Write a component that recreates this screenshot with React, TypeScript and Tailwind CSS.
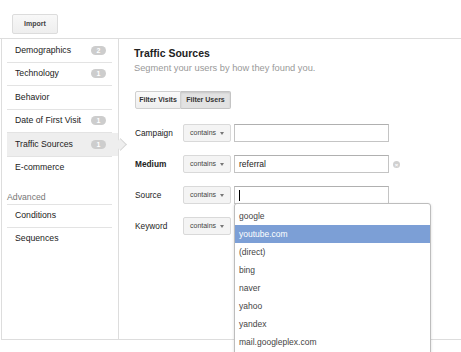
const sideItems = [
  { label: 'Demographics', count: 2 },
  { label: 'Technology', count: 1 },
  { label: 'Behavior' },
  { label: 'Date of First Visit', count: 1 },
  { label: 'Traffic Sources', count: 1, active: true },
  { label: 'E-commerce' },
];

const sources = ['google', 'youtube.com', '(direct)', 'bing', 'naver', 'yahoo', 'yandex', 'mail.googleplex.com'];

const Sep = () => <div className="mr-[6px] h-px bg-[#e3e3e3]" />;

const Select = () => (
  <div className="flex h-[18px] w-[48px] items-center justify-between rounded-[2px] border border-[#d9d9d9] bg-[#f4f4f4] pl-[6px] pr-[6px] text-[7px] text-[#444]">
    <span>contains</span>
    <span className="h-0 w-0 border-x-[2.5px] border-t-[3px] border-x-transparent border-t-[#777]" />
  </div>
);

const Row = ({ label, bold, value, cursor, clear }: { label: string; bold?: boolean; value?: string; cursor?: boolean; clear?: boolean }) => (
  <div className="flex h-[18px] items-center">
    <div className={`ml-px w-[48px] text-[8.3px] ${bold ? 'font-bold' : ''}`}>{label}</div>
    <Select />
    <div className="ml-[3px] flex h-[18px] w-[155px] items-center border border-[#c4c4c4] border-t-[#b0b0b0] bg-white pl-[4px] text-[8.5px] text-[#222]">
      {value}
      {cursor && <span className="h-[11px] w-px bg-black" />}
    </div>
    {clear && (
      <div className="ml-[4px] mt-[1px] flex h-[7px] w-[7px] items-center justify-center rounded-full bg-[#d0d0d0] text-[6px] leading-none font-bold text-white">
        ×
      </div>
    )}
  </div>
);

export default function App() {
  return (
    <div className="relative h-[352px] w-[461px] overflow-hidden bg-white font-['Liberation_Sans',Arial,sans-serif] text-[#222]">
      <div className="h-[39px] border-b border-[#ddd] pl-[12px] pt-[9px]">
        <button className="h-[20px] w-[46px] rounded-[2px] border border-[#dcdcdc] bg-gradient-to-b from-[#f8f8f8] to-[#eeeeee] text-[7px] font-bold text-[#444]">
          Import
        </button>
      </div>

      <div className="ml-px flex h-[301px] border-b border-l border-[#ddd]">
        {/* sidebar */}
        <div className="relative w-[117px] border-r border-[#ddd] pl-[5px]">
          {sideItems.map((it, i) => (
            <div key={it.label}>
              <div className={`relative flex h-[22.5px] items-center justify-between pl-[8px] pr-[12px] text-[8.7px] ${it.active ? 'bg-[#eeeeee]' : ''}`}>
                <span>{it.label}</span>
                {it.count && (
                  <span className="flex h-[9px] w-[15px] items-center justify-center rounded-full bg-[#cdcdcd] text-[7px] font-bold leading-none text-white">
                    {it.count}
                  </span>
                )}
                {it.active && (
                  <span className="absolute right-[-6.5px] top-[6.75px] z-10 h-[9px] w-[9px] rotate-45 border-r border-t border-[#d6d6d6] bg-[#eeeeee]" />
                )}
              </div>
              {i < sideItems.length - 1 && <Sep />}
            </div>
          ))}
          <div className="mr-[6px] flex h-[26px] items-end border-b border-[#e3e3e3] pb-[2px] text-[8.7px] leading-[10px] text-[#777]">
            Advanced
          </div>
          <div className="flex h-[21.5px] items-center pl-[8px] text-[8.7px]">Conditions</div>
          <Sep />
          <div className="flex h-[21.5px] items-center pl-[8px] text-[8.7px]">Sequences</div>
        </div>

        {/* main */}
        <div className="flex-1 pl-[15px] pt-[8px]">
          <div className="text-[10.5px] font-bold leading-[12px] text-[#222]">Traffic Sources</div>
          <div className="mt-[4px] text-[9.3px] leading-[11px] text-[#999]">Segment your users by how they found you.</div>

          <div className="ml-px mt-[17px] flex h-[18px] text-[7px] font-bold text-[#333]">
            <div className="flex w-[46px] items-center justify-center rounded-l-[2px] border border-[#d0d0d0] bg-gradient-to-b from-[#fafafa] to-[#eeeeee]">
              Filter Visits
            </div>
            <div className="flex w-[50px] items-center justify-center rounded-r-[2px] border border-l-0 border-[#c4c4c4] bg-[#e2e2e2] shadow-[inset_0_1px_2px_rgba(0,0,0,0.12)]">
              Filter Users
            </div>
          </div>

          <div className="mt-[15px] flex flex-col gap-[13px]">
            <Row label="Campaign" />
            <Row label="Medium" bold value="referral" clear />
            <Row label="Source" cursor />
            <Row label="Keyword" />
          </div>
        </div>
      </div>

      {/* autocomplete menu */}
      <div className="absolute left-[234px] top-[203px] h-[170px] w-[197px] rounded-[3px] border border-[#bdbdbd] bg-white pt-[3px] shadow-[0_1px_3px_rgba(0,0,0,0.15)]">
        {sources.map((s) => (
          <div
            key={s}
            className={`flex h-[18px] items-center pl-[4px] text-[8.5px] ${s === 'youtube.com' ? 'bg-[#7c9fd6] text-white' : 'text-[#444]'}`}
          >
            {s}
          </div>
        ))}
      </div>
    </div>
  );
}
